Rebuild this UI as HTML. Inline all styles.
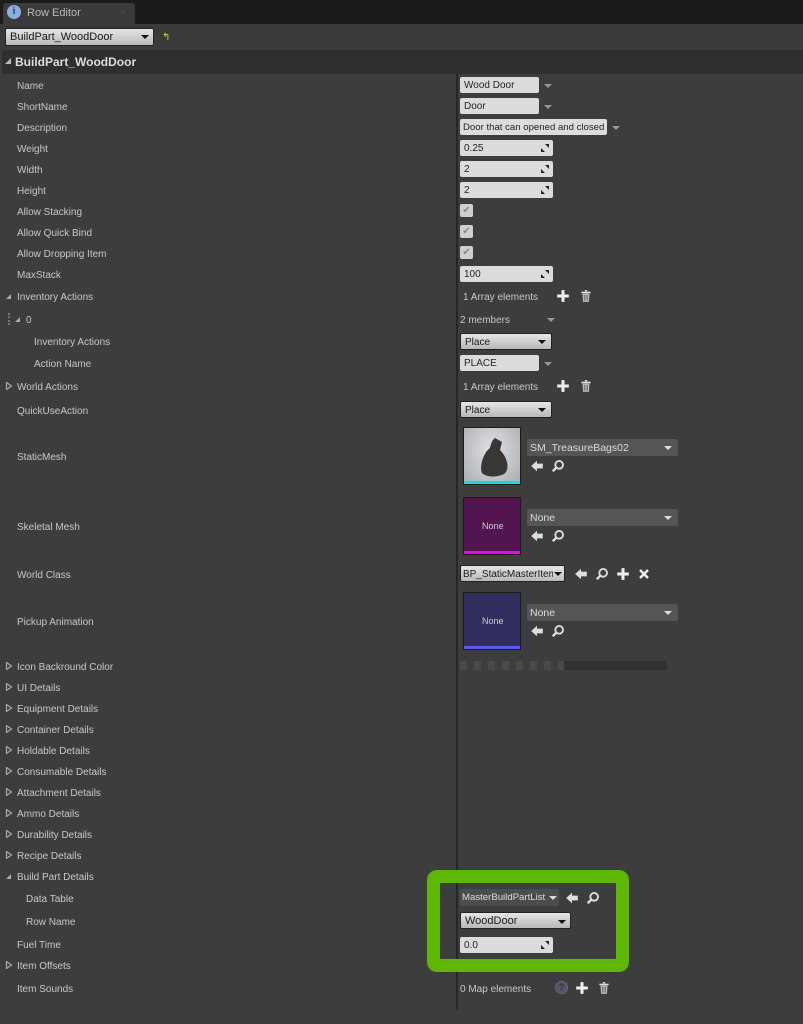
<!DOCTYPE html>
<html><head><meta charset="utf-8"><style>
*{margin:0;padding:0;box-sizing:border-box}
body{width:803px;height:1024px;background:#3d3d3d;font-family:"Liberation Sans",sans-serif;font-size:10px;color:#c8c8c8;position:relative;overflow:hidden}
.a{position:absolute}
.l{position:absolute;line-height:14px;white-space:nowrap;margin-top:2px}
.tb{position:absolute;height:16px;background:#dcdcdc;border-radius:2px;color:#222;line-height:17px;padding-left:4px;white-space:nowrap;overflow:hidden}
.dd{position:absolute;height:17px;background:linear-gradient(#e6e6e6,#b8b8b8);border-radius:2px;color:#1a1a1a;line-height:17px;padding-left:4px;border:1px solid #222;white-space:nowrap;overflow:hidden}
.ar{position:absolute;width:0;height:0;border-left:4px solid transparent;border-right:4px solid transparent;border-top:4px solid #999}
.ard{position:absolute;width:0;height:0;border-left:4px solid transparent;border-right:4px solid transparent;border-top:4px solid #111}
.cb{position:absolute;width:13px;height:13px;background:#cfcfcf;border-radius:2px;color:#888;font-size:10px;line-height:13px;text-align:center}
.tri{position:absolute;width:0;height:0}
.th{position:absolute;width:58px;height:58px;border:1px solid #1a1a1a}
.sel{position:absolute;height:17px;background:#555;border-radius:2px;color:#ddd;line-height:18px;padding-left:3px;font-size:10.5px;white-space:nowrap;overflow:hidden}
svg.i{position:absolute;width:14px;height:14px}
.rs{position:absolute;width:8px;height:8px}
</style></head><body>
<svg width="0" height="0" style="position:absolute">
<defs>
<symbol id="back" viewBox="0 0 12 12"><path d="M1 6 L6 1.5 V4 H11 V8 H6 V10.5 Z" fill="#ddd"/></symbol>
<symbol id="find" viewBox="0 0 12 12"><circle cx="7" cy="5" r="3.3" fill="none" stroke="#ddd" stroke-width="1.6"/><path d="M4.6 7.4 L1.5 10.5" stroke="#ddd" stroke-width="2"/></symbol>
<symbol id="plus" viewBox="0 0 12 12"><path d="M6 1 V11 M1 6 H11" stroke="#eee" stroke-width="2.6"/></symbol>
<symbol id="del" viewBox="0 0 12 12"><path d="M2 3 H10" stroke="#ddd" stroke-width="1.4"/><path d="M5 1.5 H7" stroke="#ddd" stroke-width="1.2"/><path d="M3 4 H9 L8.5 11 H3.5 Z" fill="#bbb"/><path d="M5 5 V10 M7 5 V10" stroke="#555" stroke-width="0.8"/></symbol>
<symbol id="x" viewBox="0 0 12 12"><path d="M2 2 L10 10 M10 2 L2 10" stroke="#eee" stroke-width="2.6"/></symbol>
<symbol id="rs" viewBox="0 0 8 8"><path d="M4 0 H8 V4 Z M0 4 V8 H4 Z" fill="#222"/></symbol>
<symbol id="ct" viewBox="0 0 8 8"><path d="M1.5 0.5 L6.5 4 L1.5 7.5 Z" fill="none" stroke="#aaa" stroke-width="1.2"/></symbol>
</defs></svg>
<div class="a" style="left:0;top:0;width:803px;height:24px;background:#1b1b1b"></div>
<div class="a" style="left:3px;top:3px;width:132px;height:21px;background:#3a3a3a;border-radius:3px 3px 0 0"></div>
<div class="a" style="left:7px;top:5px;width:14px;height:14px;border-radius:50%;background:#8ab0e0;color:#1c3c7a;font-weight:bold;font-size:10px;text-align:center;line-height:14px">i</div>
<div class="l" style="left:27px;top:4px;font-size:11px;color:#bbb">Row Editor</div>
<div class="l" style="left:120px;top:4px;color:#555">×</div>
<div class="a" style="left:0;top:24px;width:803px;height:25px;background:#3a3a3a"></div>
<div class="dd" style="left:5px;top:28px;width:149px;height:18px;font-size:11px;line-height:17px">BuildPart_WoodDoor</div>
<div class="ard" style="left:141px;top:35px"></div>
<div class="l" style="left:162px;top:29px;color:#d8d820;font-size:10px">↰</div>
<div class="a" style="left:2px;top:50px;width:801px;height:24px;background:#2f2f2f"></div>
<div class="tri" style="left:5px;top:58px;border-left:6px solid transparent;border-bottom:6px solid #bbb"></div>
<div class="l" style="left:15px;top:53px;font-size:12px;font-weight:bold;color:#ddd">BuildPart_WoodDoor</div>
<div class="a" style="left:456px;top:74px;width:2px;height:936px;background:#262626"></div>

<div class="l" style="left:17px;top:78px">Name</div>
<div class="l" style="left:17px;top:99px">ShortName</div>
<div class="l" style="left:17px;top:120px">Description</div>
<div class="l" style="left:17px;top:141px">Weight</div>
<div class="l" style="left:17px;top:162px">Width</div>
<div class="l" style="left:17px;top:183px">Height</div>
<div class="l" style="left:17px;top:204px">Allow Stacking</div>
<div class="l" style="left:17px;top:225px">Allow Quick Bind</div>
<div class="l" style="left:17px;top:246px">Allow Dropping Item</div>
<div class="l" style="left:17px;top:267px">MaxStack</div>
<div class="tri" style="left:6px;top:294px;border-left:5px solid transparent;border-bottom:5px solid #aaa"></div>
<div class="l" style="left:17px;top:289px">Inventory Actions</div>
<div class="a" style="left:8px;top:313px;width:2px;height:12px;border-left:2px dotted #777"></div>
<div class="tri" style="left:15px;top:317px;border-left:5px solid transparent;border-bottom:5px solid #aaa"></div>
<div class="l" style="left:26px;top:312px">0</div>
<div class="l" style="left:34px;top:334px">Inventory Actions</div>
<div class="l" style="left:34px;top:356px">Action  Name</div>
<div class="l" style="left:17px;top:379px">World Actions</div>
<div class="l" style="left:17px;top:403px">QuickUseAction</div>
<div class="l" style="left:17px;top:449px">StaticMesh</div>
<div class="l" style="left:17px;top:519px">Skeletal Mesh</div>
<div class="l" style="left:17px;top:567px">World Class</div>
<div class="l" style="left:17px;top:614px">Pickup Animation</div>
<div class="l" style="left:17px;top:659px">Icon Backround Color</div>
<div class="l" style="left:17px;top:680px">UI Details</div>
<div class="l" style="left:17px;top:701px">Equipment Details</div>
<div class="l" style="left:17px;top:722px">Container Details</div>
<div class="l" style="left:17px;top:743px">Holdable Details</div>
<div class="l" style="left:17px;top:764px">Consumable Details</div>
<div class="l" style="left:17px;top:785px">Attachment Details</div>
<div class="l" style="left:17px;top:806px">Ammo Details</div>
<div class="l" style="left:17px;top:827px">Durability Details</div>
<div class="l" style="left:17px;top:848px">Recipe Details</div>
<div class="tri" style="left:6px;top:874px;border-left:5px solid transparent;border-bottom:5px solid #aaa"></div>
<div class="l" style="left:17px;top:869px">Build Part Details</div>
<div class="l" style="left:26px;top:891px">Data Table</div>
<div class="l" style="left:26px;top:914px">Row Name</div>
<div class="l" style="left:17px;top:937px">Fuel Time</div>
<div class="l" style="left:17px;top:958px">Item Offsets</div>
<div class="l" style="left:17px;top:981px">Item Sounds</div>
<svg class="rs" style="left:5px;top:382px"><use href="#ct"/></svg>
<svg class="rs" style="left:5px;top:662px"><use href="#ct"/></svg>
<svg class="rs" style="left:5px;top:683px"><use href="#ct"/></svg>
<svg class="rs" style="left:5px;top:704px"><use href="#ct"/></svg>
<svg class="rs" style="left:5px;top:725px"><use href="#ct"/></svg>
<svg class="rs" style="left:5px;top:746px"><use href="#ct"/></svg>
<svg class="rs" style="left:5px;top:767px"><use href="#ct"/></svg>
<svg class="rs" style="left:5px;top:788px"><use href="#ct"/></svg>
<svg class="rs" style="left:5px;top:809px"><use href="#ct"/></svg>
<svg class="rs" style="left:5px;top:830px"><use href="#ct"/></svg>
<svg class="rs" style="left:5px;top:851px"><use href="#ct"/></svg>
<svg class="rs" style="left:5px;top:961px"><use href="#ct"/></svg>

<div class="tb" style="left:460px;top:77px;width:79px">Wood Door</div><div class="ar" style="left:544px;top:84px"></div>
<div class="tb" style="left:460px;top:98px;width:79px">Door</div><div class="ar" style="left:544px;top:105px"></div>
<div class="tb" style="left:460px;top:119px;width:147px;font-size:9.6px;padding-left:3px">Door that can opened and closed</div><div class="ar" style="left:612px;top:126px"></div>
<div class="tb" style="left:460px;top:140px;width:93px">0.25</div>
<div class="tb" style="left:460px;top:161px;width:93px">2</div>
<div class="tb" style="left:460px;top:182px;width:93px">2</div>
<div class="tb" style="left:460px;top:266px;width:93px">100</div>
<svg class="rs" style="left:541px;top:144px"><use href="#rs"/></svg>
<svg class="rs" style="left:541px;top:165px"><use href="#rs"/></svg>
<svg class="rs" style="left:541px;top:186px"><use href="#rs"/></svg>
<svg class="rs" style="left:541px;top:270px"><use href="#rs"/></svg>
<div class="cb" style="left:460px;top:204px">✔</div>
<div class="cb" style="left:460px;top:225px">✔</div>
<div class="cb" style="left:460px;top:246px">✔</div>
<div class="l" style="left:463px;top:289px">1 Array elements</div>
<svg class="i" style="left:556px;top:289px"><use href="#plus"/></svg>
<svg class="i" style="left:579px;top:289px"><use href="#del"/></svg>
<div class="l" style="left:460px;top:312px">2 members</div><div class="ar" style="left:547px;top:318px"></div>
<div class="dd" style="left:460px;top:333px;width:92px">Place</div><div class="ard" style="left:538px;top:340px"></div>
<div class="tb" style="left:460px;top:355px;width:79px">PLACE</div><div class="ar" style="left:544px;top:362px"></div>
<div class="l" style="left:463px;top:379px">1 Array elements</div>
<svg class="i" style="left:556px;top:379px"><use href="#plus"/></svg>
<svg class="i" style="left:579px;top:379px"><use href="#del"/></svg>
<div class="dd" style="left:460px;top:401px;width:92px">Place</div><div class="ard" style="left:538px;top:408px"></div>

<div class="th" style="left:463px;top:427px;background:radial-gradient(ellipse at 50% 40%,#e0e2e4,#a9acb0)"></div>
<svg class="a" style="left:464px;top:428px" width="56" height="54"><path d="M31 10 L38 14 L36 22 C44 30 46 42 40 46 C32 50 22 49 18 45 C15 38 20 24 26 20 C27 16 28 12 31 10 Z" fill="#3a3634"/></svg>
<div class="a" style="left:464px;top:481px;width:56px;height:3px;background:#00e0f0"></div>
<div class="sel" style="left:527px;top:439px;width:151px">SM_TreasureBags02</div><div class="ar" style="left:664px;top:446px;border-top-color:#ddd"></div>
<svg class="i" style="left:530px;top:459px"><use href="#back"/></svg><svg class="i" style="left:551px;top:459px"><use href="#find"/></svg>

<div class="th" style="left:463px;top:497px;background:#521552"></div>
<div class="l" style="left:482px;top:517px;font-size:9px;color:#ccc">None</div>
<div class="a" style="left:464px;top:551px;width:56px;height:3px;background:#f000f0"></div>
<div class="sel" style="left:527px;top:509px;width:151px">None</div><div class="ar" style="left:664px;top:516px;border-top-color:#ddd"></div>
<svg class="i" style="left:530px;top:529px"><use href="#back"/></svg><svg class="i" style="left:551px;top:529px"><use href="#find"/></svg>

<div class="dd" style="left:460px;top:565px;width:105px;font-size:10px;padding-left:2px">BP_StaticMasterItem</div><div class="a" style="left:553px;top:567px;width:11px;height:13px;background:linear-gradient(#e2e2e2,#c0c0c0)"></div><div class="ard" style="left:554px;top:572px"></div>
<svg class="i" style="left:574px;top:567px"><use href="#back"/></svg><svg class="i" style="left:595px;top:567px"><use href="#find"/></svg><svg class="i" style="left:616px;top:567px"><use href="#plus"/></svg><svg class="i" style="left:638px;top:568px;width:12px;height:12px"><use href="#x"/></svg>

<div class="th" style="left:463px;top:592px;background:#2f2e5e"></div>
<div class="l" style="left:482px;top:612px;font-size:9px;color:#ccc">None</div>
<div class="a" style="left:464px;top:646px;width:56px;height:3px;background:#5a5af0"></div>
<div class="sel" style="left:527px;top:604px;width:151px">None</div><div class="ar" style="left:664px;top:611px;border-top-color:#ddd"></div>
<svg class="i" style="left:530px;top:624px"><use href="#back"/></svg><svg class="i" style="left:551px;top:624px"><use href="#find"/></svg>

<div class="a" style="left:460px;top:661px;width:104px;height:9px;background:repeating-linear-gradient(90deg,#4a4a4a 0 7px,#3e3e3e 7px 14px)"></div>
<div class="a" style="left:564px;top:661px;width:103px;height:9px;background:#313131"></div>

<div class="a" style="left:427px;top:870px;width:202px;height:102px;border:13px solid #5cb800;border-radius:10px"></div>
<div class="sel" style="left:460px;top:889px;width:99px;background:#4c4c4c;font-size:9.6px;padding-left:2px">MasterBuildPartList</div><div class="a" style="left:548px;top:890px;width:10px;height:15px;background:#4c4c4c"></div><div class="ar" style="left:549px;top:896px;border-top-color:#ddd"></div>
<svg class="i" style="left:565px;top:891px"><use href="#back"/></svg><svg class="i" style="left:586px;top:891px"><use href="#find"/></svg>
<div class="dd" style="left:460px;top:912px;width:111px;font-size:11px">WoodDoor</div><div class="ard" style="left:558px;top:920px"></div>
<div class="tb" style="left:460px;top:937px;width:93px">0.0</div>
<svg class="rs" style="left:541px;top:941px"><use href="#rs"/></svg>

<div class="l" style="left:460px;top:981px">0 Map elements</div>
<div class="a" style="left:555px;top:981px;width:13px;height:13px;border-radius:50%;background:#556;border:1px solid #667;color:#223;font-size:9px;text-align:center;line-height:11px">?</div>
<svg class="i" style="left:575px;top:981px"><use href="#plus"/></svg>
<svg class="i" style="left:597px;top:981px"><use href="#del"/></svg>
</body></html>
